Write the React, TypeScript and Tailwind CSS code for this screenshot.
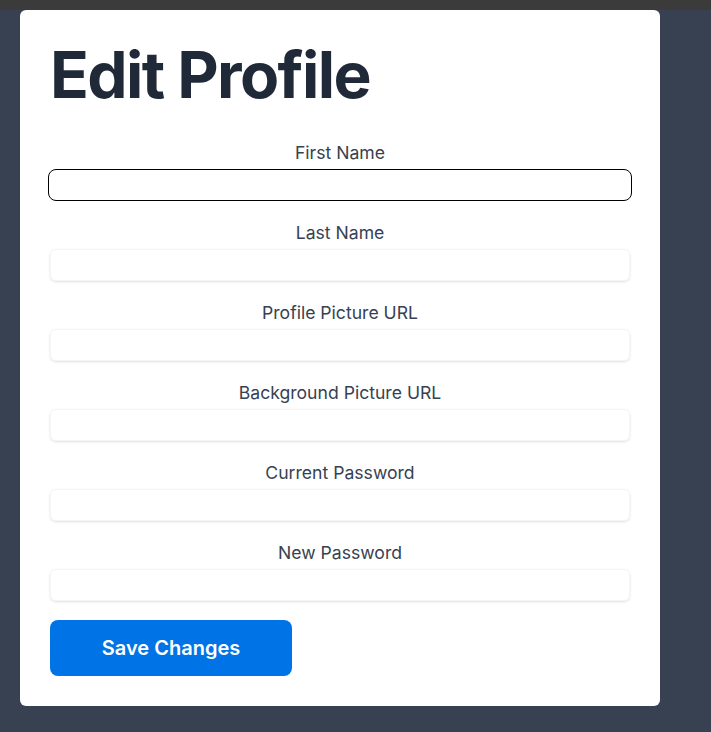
import { useState } from "react";

const fields = [
  { id: "firstName", label: "First Name", type: "text" },
  { id: "lastName", label: "Last Name", type: "text" },
  { id: "profilePicture", label: "Profile Picture URL", type: "text" },
  { id: "backgroundPicture", label: "Background Picture URL", type: "text" },
  { id: "currentPassword", label: "Current Password", type: "password" },
  { id: "newPassword", label: "New Password", type: "password" },
];

export default function App() {
  const [values, setValues] = useState<Record<string, string>>({});

  return (
    <div
      className="min-h-[732px] bg-[#374151] flex flex-col"
      style={{ fontFamily: "Inter, 'Noto Sans', sans-serif" }}
    >
      <div className="h-[10px] bg-[#3b3b3b]" />
      <div className="px-5 pb-[26px]">
        <form
          className="w-[640px] bg-white rounded-md px-[30px] pt-[33px] pb-[30px]"
          onSubmit={(e) => e.preventDefault()}
        >
          <h1 className="text-[64px] font-bold text-[#1f2937] tracking-tight leading-none mb-[34px]">
            Edit Profile
          </h1>
          <div className="flex flex-col gap-5">
            {fields.map((f, i) => (
              <div key={f.id} className="flex flex-col gap-1">
                <label
                  htmlFor={f.id}
                  className="text-center text-[17.6px] font-normal text-[#374151] leading-6"
                >
                  {f.label}
                </label>
                <input
                  id={f.id}
                  type={f.type}
                  value={values[f.id] ?? ""}
                  onChange={(e) =>
                    setValues({ ...values, [f.id]: e.target.value })
                  }
                  className={
                    i === 0
                      ? "h-8 -mx-[2px] rounded-lg border border-black outline-none px-3"
                      : "h-8 rounded-md border border-gray-100 shadow-sm outline-none px-3"
                  }
                />
              </div>
            ))}
          </div>
          <button
            type="submit"
            className="mt-[19px] w-[242px] h-14 rounded-lg bg-[#0073e6] text-white text-xl font-semibold"
          >
            Save Changes
          </button>
        </form>
      </div>
    </div>
  );
}
